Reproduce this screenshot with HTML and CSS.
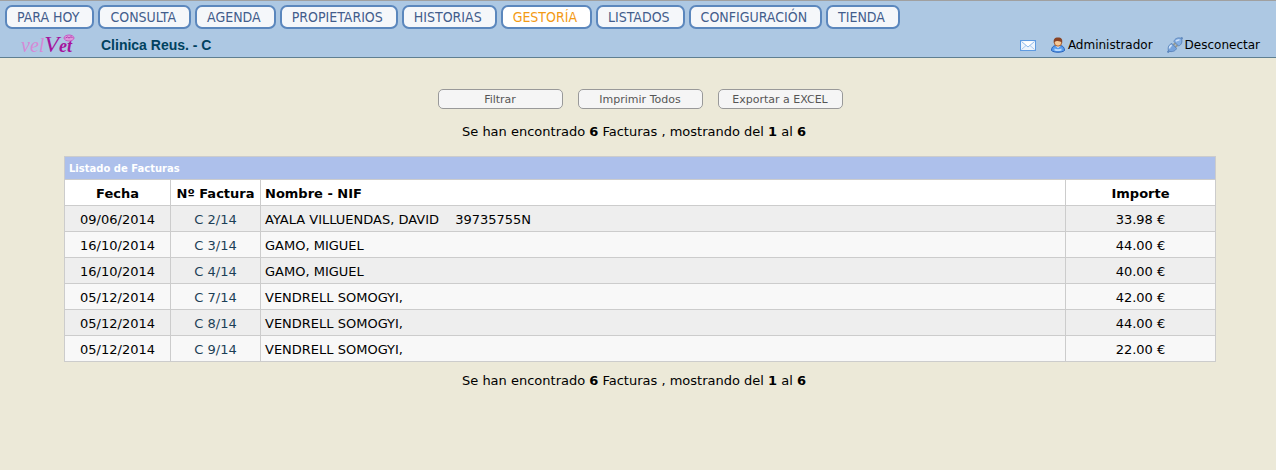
FILE: index.html
```html
<!DOCTYPE html>
<html lang="es">
<head>
    <meta charset="UTF-8">
    <meta name="viewport" content="width=device-width, initial-scale=1.0">
    <title>Listado de Facturas</title>
    <link rel="stylesheet" href="styles.css">
</head>
<body>
    <header class="header">
        <nav class="menu">
            <a href="#">PARA HOY</a>
            <a href="#">CONSULTA</a>
            <a href="#">AGENDA</a>
            <a href="#">PROPIETARIOS</a>
            <a href="#">HISTORIAS</a>
            <a href="#" class="active">GESTORÍA</a>
            <a href="#">LISTADOS</a>
            <a href="#">CONFIGURACIÓN</a>
            <a href="#">TIENDA</a>
        </nav>
        <div class="subheader">
            <a href="#" class="logo"><span class="logo-vel">vel</span><span class="logo-v">V</span><span class="logo-et">et</span><svg class="logo-mark" width="12" height="8" viewBox="0 0 12 8">
                    <ellipse cx="6" cy="4" rx="5" ry="3" fill="#dc9adb" stroke="#c858c4"/>
                    <path d="M2.500 4q2-2 3.500 0q2-2 3.500-.5" fill="none" stroke="#b53caf"/>
                </svg></a>
            <strong class="clinic">Clinica Reus. - C</strong>
            <div class="user">
                <a href="#" class="mail" aria-label="Mensajes">
                    <svg width="16" height="16" viewBox="0 0 16 16">
                        <rect x="0.500" y="3.500" width="15" height="10" fill="#eef5fd" stroke="#5f9be0"/>
                        <path d="M1.500 12.500L6 8.500M14.500 12.500L10 8.500" fill="none" stroke="#a9caf0"/>
                        <path d="M1.500 4.500L8 10L14.500 4.500" fill="#fff" stroke="#8db9ec"/>
                    </svg>
                </a>
                <a href="#" class="admin">
                    <svg width="16" height="16" viewBox="0 0 16 16">
                        <path d="M1.500 13.500c0-3 1.500-4.500 4-5h5c2.500.5 4 2 4 5c-2 2.300-11 2.300-13 0z" fill="#5a9cec" stroke="#2460b8"/>
                        <path d="M4.500 13.500q3.500 1 7 0v-2q-3.500 1.500-7 0z" fill="#b9dcff"/>
                        <path d="M5.500 8.500h5L8 11z" fill="#fff"/>
                        <circle cx="8" cy="5.500" r="3.700" fill="#f8c996" stroke="#a55b2b"/>
                        <path d="M4 6C3 2.500 4.500.5 8 .5s5 2 4 5.500C11 4 9.500 4.500 7.500 4C5.500 3.800 5 4.500 4 6z" fill="#8a4324"/>
                    </svg>
                    <span>Administrador</span>
                </a>
                <a href="#" class="logout">
                    <svg width="16" height="16" viewBox="0 0 16 16">
                        <path d="M.5 15.500l2-2M13.500 2.500l2-2" stroke="#5d87bd" stroke-width="2"/>
                        <path d="M6 8.500l3-3M8 10.500l3-3" stroke="#9a9a90" stroke-width="2"/>
                        <path d="M1.500 14c-1-4 .5-6.500 3.500-7.500l4.500 5c-1 2.500-4.500 4-8 2.500z" fill="#79a4dc" stroke="#5d87bd"/>
                        <path d="M7 4.500c.5-2.800 4-4.500 7.500-3c1 3.500 0 6.500-3 7.500z" fill="#86afe3" stroke="#5d87bd"/>
                        <path d="M2.500 11.500q0-2.500 2.300-3.200M9 4.200q1.500-1.700 3.500-1.200" fill="none" stroke="#d3e5fa" stroke-width="1.500"/>
                    </svg>
                    <span>Desconectar</span>
                </a>
            </div>
        </div>
    </header>

    <main class="content">
        <div class="actions">
            <button type="button">Filtrar</button>
            <button type="button">Imprimir Todos</button>
            <button type="button">Exportar a EXCEL</button>
        </div>

        <p class="summary">Se han encontrado <b>6</b> Facturas , mostrando del <b>1</b> al <b>6</b></p>

        <table class="invoices">
            <colgroup>
                <col class="col-date">
                <col class="col-number">
                <col>
                <col class="col-amount">
            </colgroup>
            <thead>
                <tr class="title"><th colspan="4">Listado de Facturas</th></tr>
                <tr><th>Fecha</th><th>Nº Factura</th><th class="name">Nombre - NIF</th><th>Importe</th></tr>
            </thead>
            <tbody>
                <tr><td>09/06/2014</td><td><a href="#">C 2/14</a></td><td class="name">AYALA VILLUENDAS, DAVID <span class="nif">39735755N</span></td><td>33.98 €</td></tr>
                <tr><td>16/10/2014</td><td><a href="#">C 3/14</a></td><td class="name">GAMO, MIGUEL</td><td>44.00 €</td></tr>
                <tr><td>16/10/2014</td><td><a href="#">C 4/14</a></td><td class="name">GAMO, MIGUEL</td><td>40.00 €</td></tr>
                <tr><td>05/12/2014</td><td><a href="#">C 7/14</a></td><td class="name">VENDRELL SOMOGYI,</td><td>42.00 €</td></tr>
                <tr><td>05/12/2014</td><td><a href="#">C 8/14</a></td><td class="name">VENDRELL SOMOGYI,</td><td>44.00 €</td></tr>
                <tr><td>05/12/2014</td><td><a href="#">C 9/14</a></td><td class="name">VENDRELL SOMOGYI,</td><td>22.00 €</td></tr>
            </tbody>
        </table>

        <p class="summary">Se han encontrado <b>6</b> Facturas , mostrando del <b>1</b> al <b>6</b></p>
    </main>
</body>
</html>
```
FILE: styles.css
```css
* {
    box-sizing: border-box;
}
body {
    margin: 0;
    background-color: #ece9d8;
    color: #000;
    font-family: Verdana, "DejaVu Sans", sans-serif;
    font-size: 13px;
    line-height: 16px;
}
a {
    text-decoration: none;
}
.header {
    background-color: #adc8e3;
    border-top: 1px solid #a0a0a0;
    border-bottom: 1px solid #5f7f91;
    padding: 4px 16px 0 5px;
}
.menu {
    display: flex;
    gap: 4px;
}
.menu a {
    height: 24px;
    padding: 0 13px 0 10px;
    border: 2px solid #5b87bd;
    border-radius: 7px;
    background-color: #f5f7fa;
    color: #435d8c;
    font-family: "DejaVu Sans Condensed", Tahoma, sans-serif;
    font-size: 14px;
    line-height: 20px;
}
.menu a.active {
    background-color: #fff;
    color: #f39a14;
}
.subheader {
    display: flex;
    align-items: center;
    height: 28px;
    padding: 4px 0 0 16px;
}
.logo {
    position: relative;
    display: flex;
    align-items: baseline;
    width: 80px;
    font-family: "Liberation Serif", serif;
    font-style: italic;
    font-size: 20px;
    line-height: 20px;
}
.logo-vel {
    color: #d58ad6;
}
.logo-v {
    color: #a4149c;
    font-size: 24px;
}
.logo-et {
    color: #a4149c;
    font-weight: bold;
    font-size: 18px;
}
.logo-mark {
    position: absolute;
    left: 42px;
    top: 0;
}
.clinic {
    color: #00425f;
    font-family: Arial, "Liberation Sans", sans-serif;
    font-size: 14px;
}
.user {
    display: flex;
    gap: 14px;
    margin-left: auto;
    font-size: 12px;
}
.user a {
    display: flex;
    gap: 2px;
    color: #000;
}
.content {
    padding: 31px 60px 0 64px;
}
.actions {
    display: flex;
    justify-content: center;
    gap: 15px;
}
.actions button {
    width: 125px;
    height: 20px;
    padding: 0;
    border: 1px solid #999;
    border-radius: 5px;
    background-color: #f5f5f5;
    color: #555;
    font-family: inherit;
    font-size: 11px;
}
.summary {
    margin: 15px 12px 16px 0;
    text-align: center;
}
.invoices {
    width: 100%;
    table-layout: fixed;
    border-collapse: collapse;
    background-color: #fff;
}
.col-date {
    width: 106px;
}
.col-number {
    width: 90px;
}
.col-amount {
    width: 150px;
}
.invoices th,
.invoices td {
    height: 26px;
    padding: 2px 4px 0;
    border: 1px solid #ccc;
    text-align: center;
    white-space: nowrap;
}
.invoices .title th {
    height: 23px;
    background-color: #adc0eb;
    color: #fff;
    font-size: 10px;
    text-align: left;
}
.invoices .name {
    text-align: left;
}
.nif {
    margin-left: 12px;
}
.invoices tbody tr {
    background-color: #f8f8f8;
}
.invoices tbody tr:nth-child(odd) {
    background-color: #eee;
}
.invoices td a {
    color: #1c3f56;
}
.invoices + .summary {
    margin-top: 11px;
}
```
